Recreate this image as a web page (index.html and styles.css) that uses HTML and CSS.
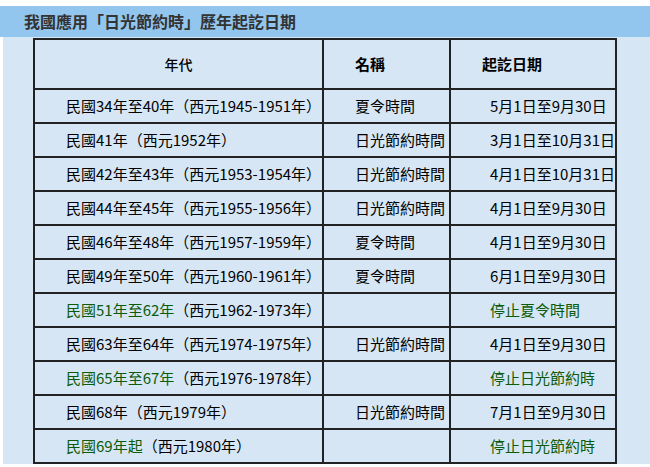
FILE: index.html
```html
<!DOCTYPE html>
<html lang="zh-Hant">
<head>
<meta charset="utf-8">
<link rel="stylesheet" href="styles.css">
</head>
<body>
<div class="panel">
  <div class="title">我國應用「日光節約時」歷年起訖日期</div>
  <div class="content">
    <table class="dst">
      <colgroup>
        <col class="c1"><col class="c2"><col class="c3">
      </colgroup>
      <thead>
        <tr>
          <th class="h-center">年代</th>
          <th class="h-bold">名稱</th>
          <th class="h-bold">起訖日期</th>
        </tr>
      </thead>
      <tbody>
        <tr><td>民國34年至40年（西元1945-1951年）</td><td>夏令時間</td><td class="date">5月1日至9月30日</td></tr>
        <tr><td>民國41年（西元1952年）</td><td>日光節約時間</td><td class="date">3月1日至10月31日</td></tr>
        <tr><td>民國42年至43年（西元1953-1954年）</td><td>日光節約時間</td><td class="date">4月1日至10月31日</td></tr>
        <tr><td>民國44年至45年（西元1955-1956年）</td><td>日光節約時間</td><td class="date">4月1日至9月30日</td></tr>
        <tr><td>民國46年至48年（西元1957-1959年）</td><td>夏令時間</td><td class="date">4月1日至9月30日</td></tr>
        <tr><td>民國49年至50年（西元1960-1961年）</td><td>夏令時間</td><td class="date">6月1日至9月30日</td></tr>
        <tr><td><span class="green">民國51年至62年</span>（西元1962-1973年）</td><td></td><td class="date stop">停止夏令時間</td></tr>
        <tr><td>民國63年至64年（西元1974-1975年）</td><td>日光節約時間</td><td class="date">4月1日至9月30日</td></tr>
        <tr><td><span class="green">民國65年至67年</span>（西元1976-1978年）</td><td></td><td class="date stop">停止日光節約時</td></tr>
        <tr><td>民國68年（西元1979年）</td><td>日光節約時間</td><td class="date">7月1日至9月30日</td></tr>
        <tr><td><span class="green">民國69年起</span>（西元1980年）</td><td></td><td class="date stop">停止日光節約時</td></tr>
      </tbody>
    </table>
  </div>
</div>
</body>
</html>
```

FILE: styles.css
```css
html, body {
  margin: 0;
  padding: 0;
  background: #ffffff;
}

body {
  font-family: "Noto Sans CJK TC", "Noto Sans", sans-serif;
  color: #000000;
}

.panel {
  margin-top: 6px;
  width: 650px;
}

.title {
  height: 31px;
  line-height: 31px;
  background: #93c6ee;
  color: #333333;
  font-size: 16px;
  font-weight: bold;
  padding-left: 24px;
}

.content {
  background: #d6e6f5;
  padding: 1px 0 0 30px;
  margin-left: 3px;
}

.dst {
  border-collapse: collapse;
  table-layout: fixed;
  width: 582px;
}

.c1 { width: 289px; }
.c2 { width: 127px; }
.c3 { width: 166px; }

.dst th,
.dst td {
  border: 2px solid #222222;
  white-space: nowrap;
  overflow: hidden;
  vertical-align: middle;
  font-size: 15px;
  line-height: 18px;
}

.dst th {
  height: 48px;
  padding: 0 0 0 31px;
  text-align: left;
  font-weight: bold;
  color: #000000;
}

.dst th.h-center {
  text-align: center;
  padding-left: 0;
  font-weight: 500;
  font-size: 14px;
}

.dst td {
  height: 32px;
  padding: 0 0 0 31px;
  text-align: left;
}

.dst td.date {
  padding-left: 39px;
}

.dst td.stop,
.green {
  color: #0b5b0b;
}
```
